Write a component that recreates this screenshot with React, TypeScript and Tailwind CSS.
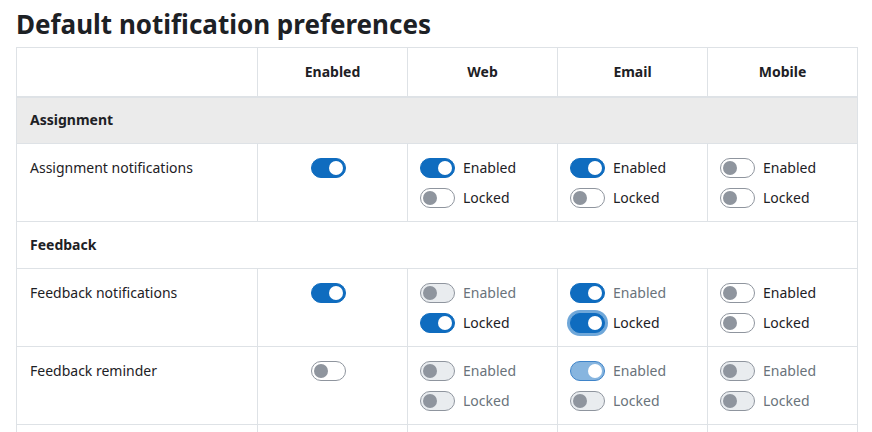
import React from 'react';

type ToggleProps = {
  checked?: boolean;
  disabled?: boolean;
  focused?: boolean;
  muted?: boolean;
};

function Toggle({ checked, disabled, focused }: ToggleProps) {
  let track = 'bg-white border-[#8f959e]';
  if (checked && !disabled) track = 'bg-[#0f6cbf] border-[#0f6cbf]';
  if (checked && disabled) track = 'bg-[#87b5df] border-[#3f84c9]';
  if (!checked && disabled) track = 'bg-[#e9ecef] border-[#8f959e]';
  return (
    <span
      className={`relative inline-flex h-[20px] w-[35px] shrink-0 items-center rounded-full border ${track} ${
        focused ? 'ring-[3px] ring-[#0f6cbf]/60' : ''
      } ${checked ? 'justify-end' : 'justify-start'}`}
    >
      <span
        className={`mx-[2px] h-[14px] w-[14px] rounded-full ${checked ? 'bg-white' : 'bg-[#8f959e]'}`}
      />
    </span>
  );
}

type Setting = ToggleProps;
type Channel = { enabled: Setting; locked: Setting };

function ChannelCell({ ch }: { ch: Channel }) {
  const label = (s: Setting) => (s.disabled || s.muted ? 'text-[#6a737b]' : 'text-[#1d2125]');
  return (
    <td className="border border-[#dee2e6] px-[12px] pt-[14px] pb-[10px] align-top">
      <div className="flex flex-col gap-[10px] leading-[20px]">
        <label className="flex items-center gap-[8px]">
          <Toggle {...ch.enabled} />
          <span className={label(ch.enabled)}>Enabled</span>
        </label>
        <label className="flex items-center gap-[8px]">
          <Toggle {...ch.locked} />
          <span className={label(ch.locked)}>Locked</span>
        </label>
      </div>
    </td>
  );
}

const rows = [
  {
    section: 'Assignment',
    items: [
      {
        name: 'Assignment notifications',
        enabled: true,
        web: { enabled: { checked: true }, locked: {} },
        email: { enabled: { checked: true }, locked: {} },
        mobile: { enabled: {}, locked: {} },
      },
    ],
  },
  {
    section: 'Feedback',
    items: [
      {
        name: 'Feedback notifications',
        enabled: true,
        web: { enabled: { disabled: true }, locked: { checked: true } },
        email: { enabled: { checked: true, muted: true }, locked: { checked: true, focused: true } },
        mobile: { enabled: {}, locked: {} },
      },
      {
        name: 'Feedback reminder',
        enabled: false,
        web: { enabled: { disabled: true }, locked: { disabled: true } },
        email: { enabled: { checked: true, disabled: true }, locked: { disabled: true } },
        mobile: { enabled: { disabled: true }, locked: { disabled: true } },
      },
    ],
  },
];

export default function App() {
  return (
    <div className="h-[432px] w-[872px] overflow-hidden bg-white px-[16px] font-['Noto_Sans',sans-serif] text-[14px] text-[#1d2125]">
      <h2 className="pt-[6px] pb-[5px] text-[26px] leading-[36px] font-bold">Default notification preferences</h2>
      <table className="w-[841px] table-fixed border-collapse">
        <colgroup>
          <col className="w-[241px]" />
          <col className="w-[150px]" />
          <col className="w-[150px]" />
          <col className="w-[150px]" />
          <col className="w-[150px]" />
        </colgroup>
        <thead>
          <tr className="h-[49px] border-b-2 border-[#dee2e6]">
            <th className="border border-[#dee2e6]"></th>
            {['Enabled', 'Web', 'Email', 'Mobile'].map((h) => (
              <th key={h} className="border border-[#dee2e6] border-b-2 text-center text-[14px] font-bold">
                {h}
              </th>
            ))}
          </tr>
        </thead>
        <tbody>
          {rows.map((group, gi) => (
            <React.Fragment key={group.section}>
              <tr className={`h-[47px] ${gi === 0 ? 'bg-[#ebebeb]' : 'bg-white'}`}>
                <td colSpan={5} className="border border-[#dee2e6] px-[13px] pb-[2px] text-[14px] font-bold">
                  {group.section}
                </td>
              </tr>
              {group.items.map((item) => (
                <tr key={item.name} className="h-[78px]">
                  <td className="border border-[#dee2e6] px-[13px] pt-[14px] align-top leading-[20px]">{item.name}</td>
                  <td className="border border-[#dee2e6] pt-[14px] align-top">
                    <div className="flex justify-center pr-[9px]">
                      <Toggle checked={item.enabled} />
                    </div>
                  </td>
                  <ChannelCell ch={item.web} />
                  <ChannelCell ch={item.email} />
                  <ChannelCell ch={item.mobile} />
                </tr>
              ))}
            </React.Fragment>
          ))}
          <tr className="h-[40px]">
            <td className="border border-[#dee2e6]"></td>
            <td className="border border-[#dee2e6]"></td>
            <td className="border border-[#dee2e6]"></td>
            <td className="border border-[#dee2e6]"></td>
            <td className="border border-[#dee2e6]"></td>
          </tr>
        </tbody>
      </table>
    </div>
  );
}
